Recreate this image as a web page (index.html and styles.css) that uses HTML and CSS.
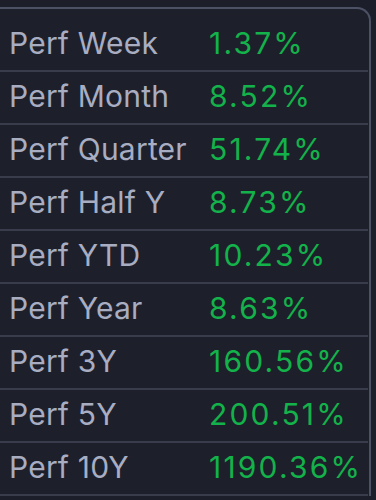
FILE: index.html
```html
<!DOCTYPE html>
<html>
<head>
<meta charset="utf-8">
<link rel="stylesheet" href="styles.css">
</head>
<body>
<div class="panel">
  <div class="row"><span class="label">Perf Week</span><span class="value">1.37%</span></div>
  <div class="row"><span class="label">Perf Month</span><span class="value">8.52%</span></div>
  <div class="row"><span class="label">Perf Quarter</span><span class="value">51.74%</span></div>
  <div class="row"><span class="label">Perf Half Y</span><span class="value">8.73%</span></div>
  <div class="row"><span class="label">Perf YTD</span><span class="value">10.23%</span></div>
  <div class="row"><span class="label">Perf Year</span><span class="value">8.63%</span></div>
  <div class="row"><span class="label">Perf 3Y</span><span class="value">160.56%</span></div>
  <div class="row"><span class="label">Perf 5Y</span><span class="value">200.51%</span></div>
  <div class="row"><span class="label">Perf 10Y</span><span class="value">1190.36%</span></div>
</div>
</body>
</html>
```

FILE: styles.css
```css
html, body {
  margin: 0;
  padding: 0;
  background: #1c1f29;
  overflow: hidden;
  height: 500px;
}
body {
  font-family: Inter, "Noto Sans", sans-serif;
}
.panel {
  margin: 7px 5px 0 -20px;
  border: 2px solid #4c5165;
  border-bottom: none;
  border-radius: 0 14px 0 0;
  padding-top: 10px;
  background: #1d202a;
}
.row {
  display: grid;
  grid-template-columns: 200px 1fr;
  height: 51px;
  padding-left: 27px;
  margin-right: 1px;
  border-bottom: 2px solid #393d4b;
  font-size: 30px;
  line-height: 48px;
  box-sizing: content-box;
}
.label {
  color: #a8adc2;
  letter-spacing: 0.2px;
}
.value {
  color: #13b24b;
  letter-spacing: 2.2px;
}
```
